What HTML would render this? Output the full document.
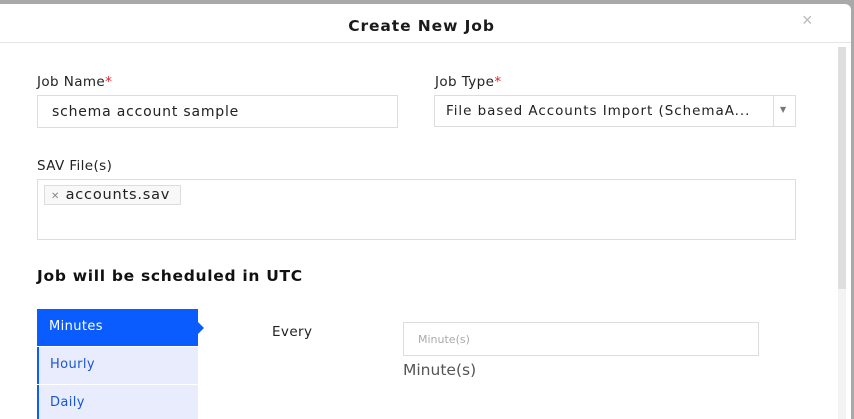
<!DOCTYPE html>
<html><head><meta charset="utf-8"><style>
*{box-sizing:border-box;margin:0;padding:0}
html,body{width:854px;height:419px;overflow:hidden}
body{background:#a9a9a9;position:relative;font-family:"DejaVu Sans","Liberation Sans",sans-serif;color:#222}
.modal{position:absolute;left:0;top:4px;width:851px;height:415px;background:#fff;border-radius:0 6px 0 0;overflow:hidden}
.hdr{height:39px;border-bottom:1px solid #e5e5e5;text-align:center;font-weight:bold;font-size:15.5px;letter-spacing:0.9px;line-height:44px;color:#1a1a1a;padding-right:8px}
.x{position:absolute;left:802px;top:6px;color:#bbb;font-size:18px;font-family:"Liberation Sans",sans-serif}
.sb{position:absolute;left:838px;top:43px;width:8px;height:242px;background:#dedede}
.sb2{position:absolute;left:838px;top:285px;width:8px;height:140px;background:#f3f3f3}
.a{position:absolute}
.lbl{font-size:13.5px;color:#222;letter-spacing:0.4px}
.req{color:#e0202a}
.inp{border:1px solid #ddd;background:#fff;white-space:nowrap;overflow:hidden}
</style></head><body>
<div class="modal">
<div class="hdr">Create New Job</div>
<div class="x">×</div>
<div class="sb"></div><div class="sb2"></div>
<div class="a lbl" style="left:37px;top:70px">Job Name<span class="req">*</span></div>
<div class="a lbl" style="left:435px;top:70px">Job Type<span class="req">*</span></div>
<div class="a inp" style="left:37px;top:91px;width:361px;height:33px;font-size:14px;letter-spacing:0.8px;padding:8px 14px">schema account sample</div>
<div class="a inp" style="left:434px;top:91px;width:362px;height:32px;font-size:13.5px;letter-spacing:0.95px;padding:7px 11px">File based Accounts Import (SchemaA...</div>
<div class="a" style="left:773px;top:92px;width:22px;height:30px;background:#fff;border-left:1px solid #ddd"></div>
<div class="a" style="left:780px;top:101px;font-size:8px;color:#777">▼</div>
<div class="a lbl" style="left:37px;top:154px">SAV File(s)</div>
<div class="a inp" style="left:37px;top:175px;width:759px;height:61px"></div>
<div class="a" style="left:44px;top:181px;width:137px;height:20px;border:1px solid #ddd;background:#f8f8f8;font-size:14.5px;letter-spacing:0.8px;padding:0 6px;line-height:18px"><span style="color:#888;font-size:10px">✕</span> accounts.sav</div>
<div class="a" style="left:37px;top:263px;font-weight:bold;font-size:15.5px;letter-spacing:0.7px;color:#111">Job will be scheduled in UTC</div>
<div class="a" style="left:37px;top:305px;width:161px;height:37px;background:#0a5cff;color:#fff;font-size:13px;letter-spacing:0.4px;padding:10px 12px">Minutes</div>
<div class="a" style="left:198px;top:318px;width:0;height:0;border-top:6px solid transparent;border-bottom:6px solid transparent;border-left:6px solid #0a5cff"></div>
<div class="a" style="left:37px;top:343px;width:161px;height:37px;background:#e9ecfc;border-left:2px solid #0a5cff;color:#1a55d6;font-size:13px;letter-spacing:0.4px;padding:10px 11px">Hourly</div>
<div class="a" style="left:37px;top:381px;width:161px;height:37px;background:#e9ecfc;border-left:2px solid #0a5cff;color:#1a55d6;font-size:13px;letter-spacing:0.4px;padding:10px 11px">Daily</div>
<div class="a lbl" style="left:272px;top:320px">Every</div>
<div class="a inp" style="left:403px;top:318px;width:356px;height:34px;font-size:11px;color:#aaa;padding:10px 14px">Minute(s)</div>
<div class="a" style="left:403px;top:357px;font-size:15.5px;color:#555">Minute(s)</div>
</div>
</body></html>
